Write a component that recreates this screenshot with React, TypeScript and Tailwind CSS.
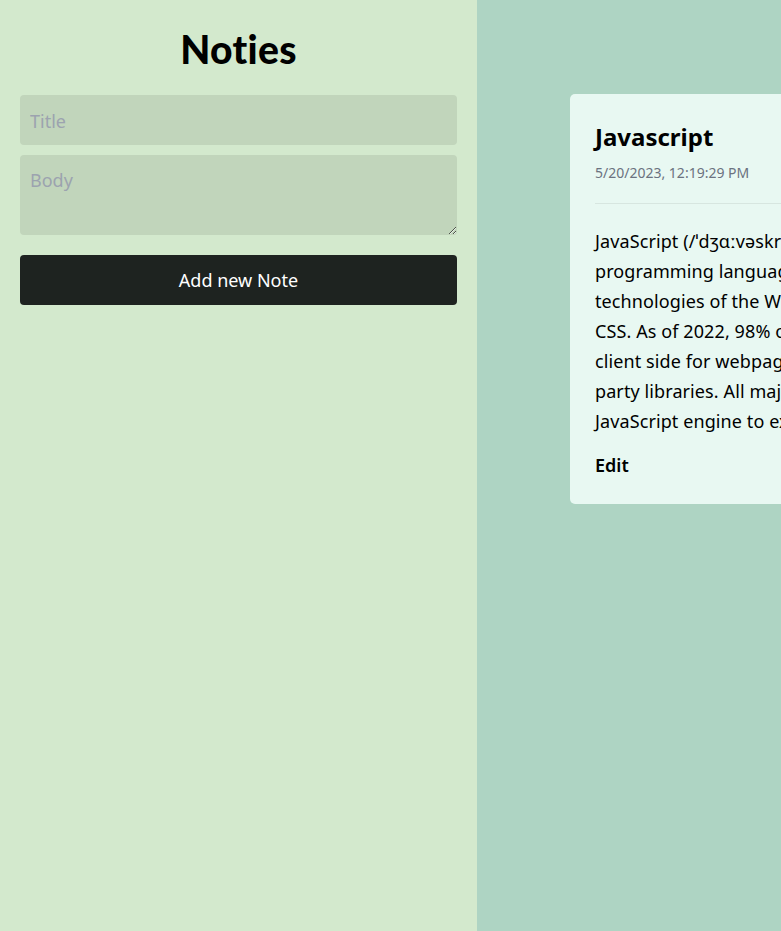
import React from "react";

const lines = [
  "JavaScript (/ˈdʒɑːvəskrɪpt/), often abbreviated as JS, is a",
  "programming language that is one of the core",
  "technologies of the World Wide Web, alongside HTML and",
  "CSS. As of 2022, 98% of websites use JavaScript on the",
  "client side for webpage behavior, often incorporating third-",
  "party libraries. All major web browsers have a dedicated",
  "JavaScript engine to execute the code on users' devices.",
];

export default function App() {
  return (
    <div className="flex w-[781px] h-[931px] overflow-hidden font-['Noto_Sans',sans-serif] text-black">
      <div className="w-[477px] shrink-0 bg-[#d3e9cd] px-5 pt-5 flex flex-col">
        <h1 className="mt-[8px] text-center text-[39px] leading-[42px] font-black font-['Lato',sans-serif] tracking-[0.3px]">
          Noties
        </h1>
        <input
          className="mt-[25px] h-[50px] w-full rounded-[4px] bg-[#c1d5bb] px-[10px] pt-[1px] text-[18px] outline-none placeholder:text-[#9ca3af]"
          placeholder="Title"
        />
        <textarea
          className="mt-[10px] h-[80px] w-full rounded-[4px] bg-[#c1d5bb] px-[10px] pt-[12px] text-[18px] outline-none placeholder:text-[#9ca3af]"
          placeholder="Body"
        />
        <button className="mt-[20px] h-[50px] w-full rounded-[4px] bg-[#1e2320] pt-[1px] text-[18px] text-white">
          Add new Note
        </button>
      </div>
      <div className="flex-1 bg-[#aed4c3] pt-[94px] pl-[93px]">
        <div className="w-[520px] rounded-[5px] bg-[#e8f8f2] pl-[25px] pr-[25px] pt-[27px] pb-[24px]">
          <h2 className="text-[24px] leading-[32px] font-bold">Javascript</h2>
          <div className="mt-[10px] text-[14px] leading-[20px] text-[#6b7280]">
            5/20/2023, 12:19:29 PM
          </div>
          <div className="mt-[20px] h-px bg-[#d7e6e0]" />
          <div className="mt-[22px] text-[18px] leading-[30px] tracking-[0.1px]">
            {lines.map((l, i) => (
              <div key={i} className="whitespace-nowrap">
                {l}
              </div>
            ))}
          </div>
          <button className="mt-[14px] text-[18px] leading-[30px] font-semibold">Edit</button>
        </div>
      </div>
    </div>
  );
}
